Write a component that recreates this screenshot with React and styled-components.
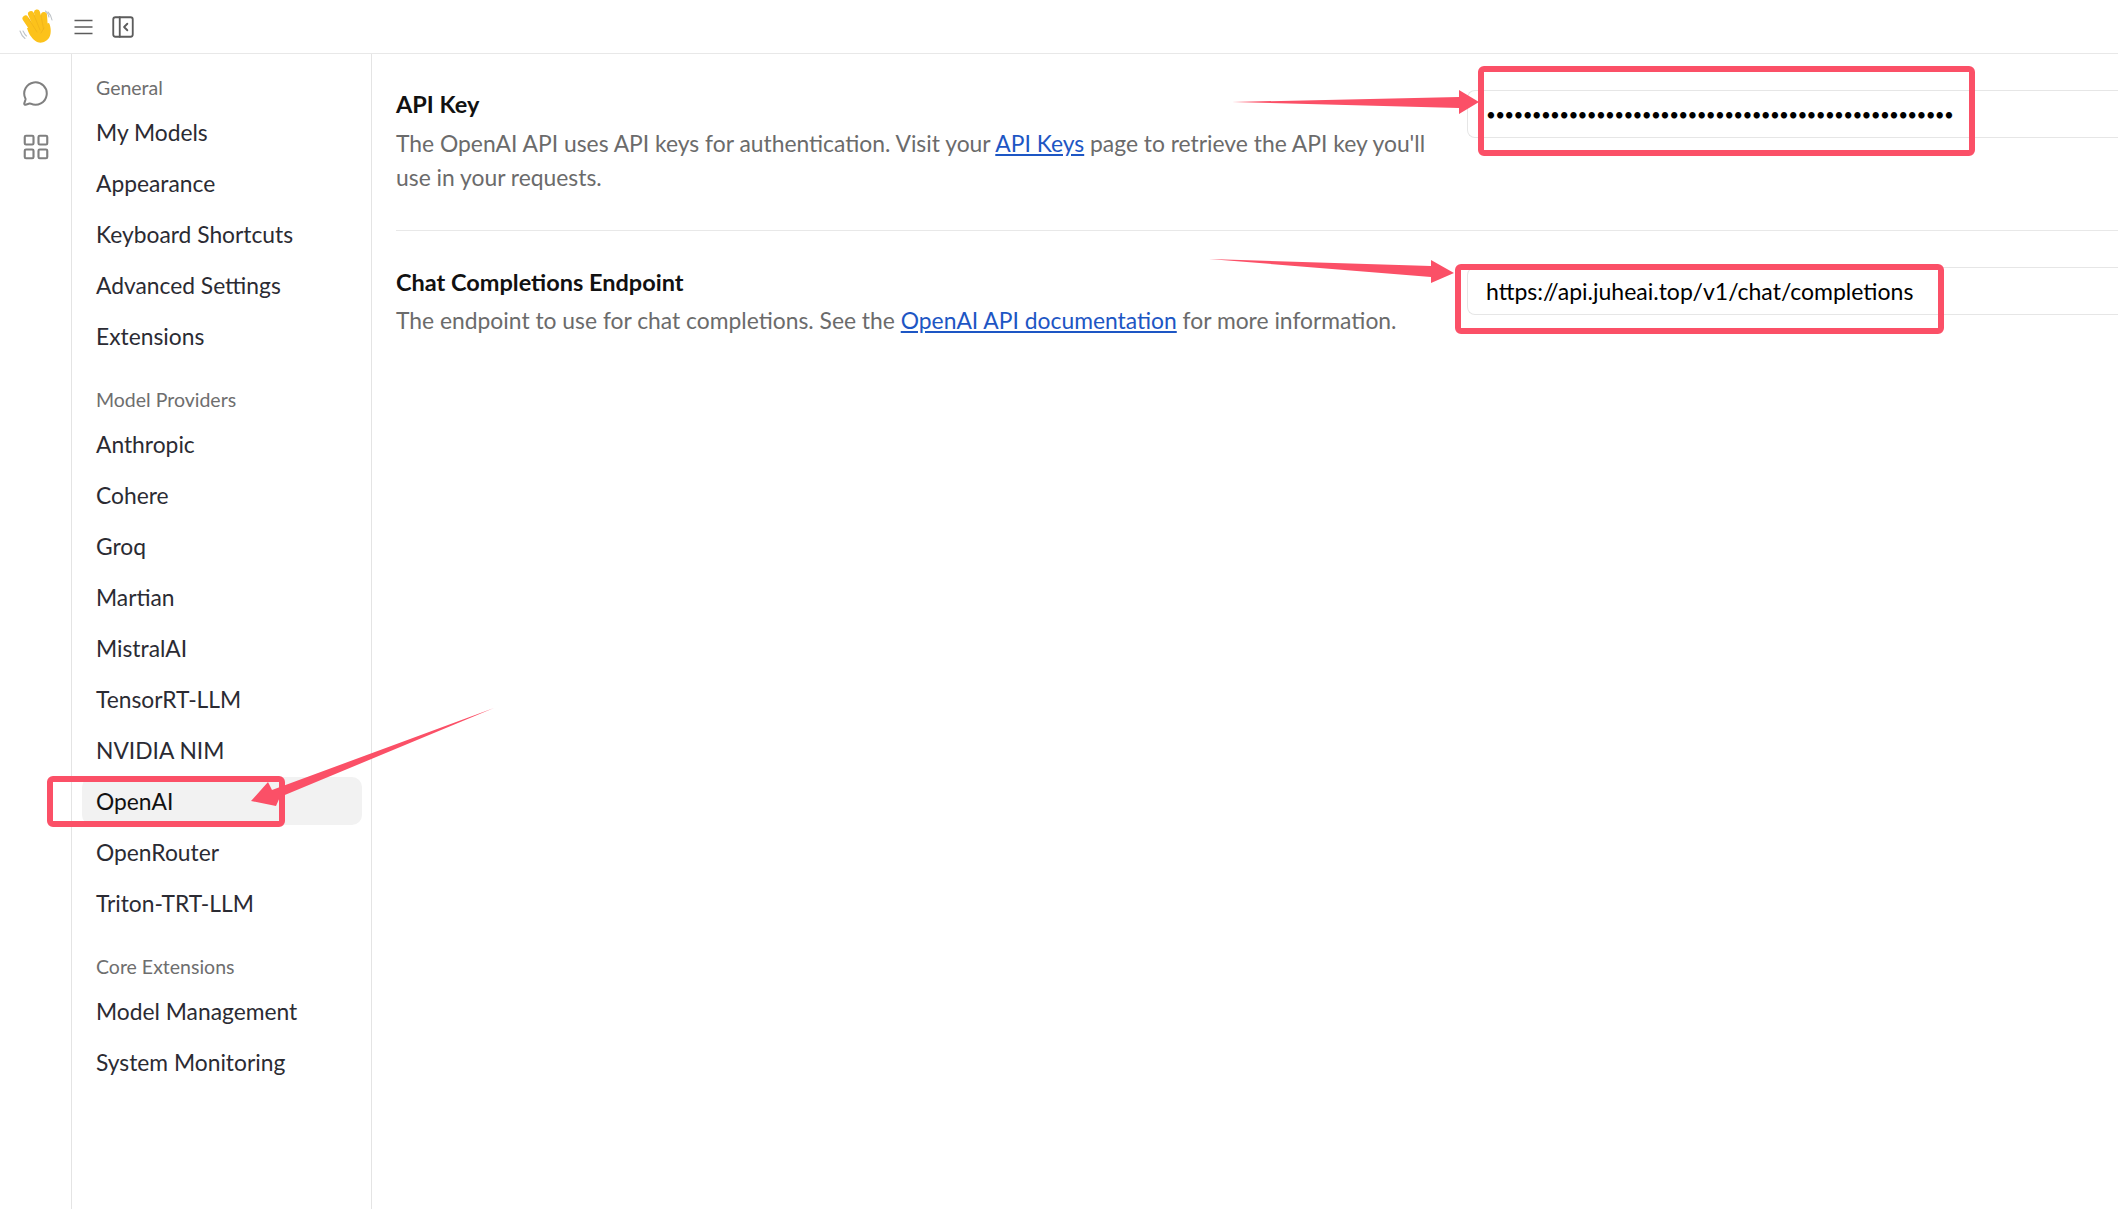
import React from "react";
import styled, { createGlobalStyle } from "styled-components";
import { MessageCircle, LayoutGrid, PanelLeftClose } from "lucide-react";

const Global = createGlobalStyle`
  html, body { margin: 0; padding: 0; background: #fff; height: 100%; overflow: hidden; }
  * { box-sizing: border-box; }
  body { font-family: "Lato", "Open Sans", "Liberation Sans", sans-serif; }
`;

const Page = styled.div`
  position: relative;
  width: 2118px;
  height: 1209px;
  display: flex;
  flex-direction: column;
  overflow: hidden;
`;
const TopBar = styled.header`
  flex: 0 0 54px;
  display: flex;
  align-items: center;
  padding: 0 0 0 18px;
  border-bottom: 1px solid #e8e8e8;
`;
const Logo = styled.svg`
  width: 36px;
  height: 36px;
  margin-right: 20px;
`;
const BarIcon = styled.span`
  display: flex;
  color: #5c5c5c;
  margin-right: ${(p) => p.$gap || 0}px;
`;
const Body = styled.div`
  flex: 1;
  display: flex;
  min-height: 0;
`;
const Rail = styled.nav`
  flex: 0 0 72px;
  border-right: 1px solid #e4e4e4;
  display: flex;
  flex-direction: column;
  align-items: center;
  gap: 26px;
  padding-top: 25px;
  color: #808080;
`;
const RailIcon = styled.span`
  display: flex;
  width: 30px;
  height: 28px;
  align-items: center;
  justify-content: center;
`;
const SideNav = styled.aside`
  flex: 0 0 300px;
  border-right: 1px solid #e4e4e4;
  padding: 19px 9px 0 10px;
`;
const Group = styled.section`
  margin-bottom: 25px;
`;
const GroupLabel = styled.div`
  height: 30px;
  line-height: 30px;
  margin-bottom: 5px;
  padding-left: 14px;
  font-size: 19.5px;
  color: #6e6e6e;
`;
const NavItem = styled.div`
  height: 48px;
  line-height: 48px;
  margin-bottom: 3px;
  padding-left: 14px;
  border-radius: 10px;
  font-size: 22.8px;
  color: ${(p) => (p.$active ? "#111" : "#2b2b33")};
  background: ${(p) => (p.$active ? "#f2f2f2" : "transparent")};
`;
const Main = styled.main`
  flex: 1;
  min-width: 0;
  padding-left: 24px;
`;
const Row = styled.div`
  display: grid;
  grid-template-columns: 1071px 1fr;
  padding: ${(p) => p.$top}px 0 36px;
  border-bottom: ${(p) => (p.$line ? "1px solid #e8e8e8" : "none")};
`;
const Label = styled.div`
  line-height: 34px;
  font-size: 23.5px;
  font-weight: 700;
  color: #111;
  margin-bottom: ${(p) => p.$mb}px;
`;
const Desc = styled.div`
  width: 1040px;
  line-height: 34px;
  font-size: 22.85px;
  color: #6b6b6b;
  a {
    color: #1d56c4;
    text-decoration: underline;
  }
`;
const Field = styled.input`
  display: block;
  width: 100%;
  height: 48px;
  margin-top: ${(p) => p.$mt}px;
  padding: 0 0 0 18px;
  border: 1px solid #e6e6e6;
  border-right: none;
  border-radius: 8px 0 0 8px;
  outline: none;
  font-family: "Lato", "Liberation Sans", sans-serif;
  font-size: ${(p) => p.$size}px;
  color: #000;
  background: transparent;
  letter-spacing: ${(p) => p.$spacing || 0}px;
`;
const Overlay = styled.svg`
  position: absolute;
  inset: 0;
  width: 2118px;
  height: 1209px;
  pointer-events: none;
`;

const RED = "#fb5067";

function Hand() {
  return (
    <Logo viewBox="0 0 36 36" fill="none">
      <g stroke="#fcc21b" strokeWidth="6" strokeLinecap="round">
        <path d="M7.5 9.5 L18 25" />
        <path d="M13 5 L21 23" />
        <path d="M19 3.5 L24 22" />
        <path d="M26 6 L27 21" />
      </g>
      <path d="M14 18 L31 14 C33 18 33.5 24 31.5 28 C29 33 22 35.5 17.5 32 C13 29 10 23 9 19 Z" fill="#fcc21b" />
      <g stroke="#eeb01a" strokeWidth="0.7" strokeLinecap="round">
        <path d="M10.5 9.5 L19 23" />
        <path d="M16 6 L22 21" />
        <path d="M23 6 L25.5 20" />
        <path d="M23 24 L26 19" />
      </g>
      <g stroke="#bfc4c8" strokeWidth="1.1" strokeLinecap="round">
        <path d="M2 22 C3 25 5 28 7 29.5" />
        <path d="M5 22 C6 24 7 26 8.5 27" />
        <path d="M30 3 C32 5 33.5 8 34 11" />
        <path d="M27.5 2 C29 3 30.5 6 31 8" />
      </g>
    </Logo>
  );
}

const groups = [
  { title: "General", items: ["My Models", "Appearance", "Keyboard Shortcuts", "Advanced Settings", "Extensions"] },
  {
    title: "Model Providers",
    items: ["Anthropic", "Cohere", "Groq", "Martian", "MistralAI", "TensorRT-LLM", "NVIDIA NIM", "OpenAI", "OpenRouter", "Triton-TRT-LLM"],
  },
  { title: "Core Extensions", items: ["Model Management", "System Monitoring"] },
];

export default function App() {
  return (
    <Page>
      <Global />
      <TopBar>
        <Hand />
        <BarIcon $gap={17}>
          <svg width="19" height="20" viewBox="0 0 19 20" fill="none" stroke="currentColor" strokeWidth="1.7">
            <path d="M0.5 3.5H18.5M0.5 10H18.5M0.5 16.5H18.5" />
          </svg>
        </BarIcon>
        <BarIcon>
          <PanelLeftClose size={26} strokeWidth={1.7} />
        </BarIcon>
      </TopBar>
      <Body>
        <Rail>
          <RailIcon>
            <MessageCircle size={27} strokeWidth={1.8} />
          </RailIcon>
          <RailIcon>
            <LayoutGrid size={30} strokeWidth={1.7} />
          </RailIcon>
        </Rail>
        <SideNav>
          {groups.map((g) => (
            <Group key={g.title}>
              <GroupLabel>{g.title}</GroupLabel>
              {g.items.map((i) => (
                <NavItem key={i} $active={i === "OpenAI"}>
                  {i}
                </NavItem>
              ))}
            </Group>
          ))}
        </SideNav>
        <Main>
          <Row $top={33} $line>
            <div>
              <Label $mb={5}>API Key</Label>
              <Desc>
                The OpenAI API uses API keys for authentication. Visit your <a href="#k">API Keys</a> page to retrieve the API key you'll use in your requests.
              </Desc>
            </div>
            <Field type="password" readOnly value={"x".repeat(51)} $size={17} $spacing={-0.7} $mt={3} />
          </Row>
          <Row $top={34}>
            <div>
              <Label $mb={4}>Chat Completions Endpoint</Label>
              <Desc>
                The endpoint to use for chat completions. See the <a href="#d">OpenAI API documentation</a> for more information.
              </Desc>
            </div>
            <Field type="text" readOnly value="https://api.juheai.top/v1/chat/completions" $size={23} $mt={2} />
          </Row>
        </Main>
      </Body>
      <Overlay viewBox="0 0 2118 1209" fill="none">
        <g stroke={RED} strokeWidth="6" strokeLinejoin="round">
          <rect x="1481" y="69" width="491" height="84" rx="3" />
          <rect x="1458" y="267" width="483" height="64" rx="3" />
          <rect x="50" y="779" width="232" height="45" rx="3" />
        </g>
        <g fill={RED}>
          <polygon points="1232,102 1459,97 1459,90 1479,102 1459,114 1459,108" />
          <polygon points="1209,259 1431,266 1431,260 1454,273 1431,283 1431,277" />
          <polygon points="494,708 280,797 276,806 251,801 268,782 272,790" />
        </g>
      </Overlay>
    </Page>
  );
}
